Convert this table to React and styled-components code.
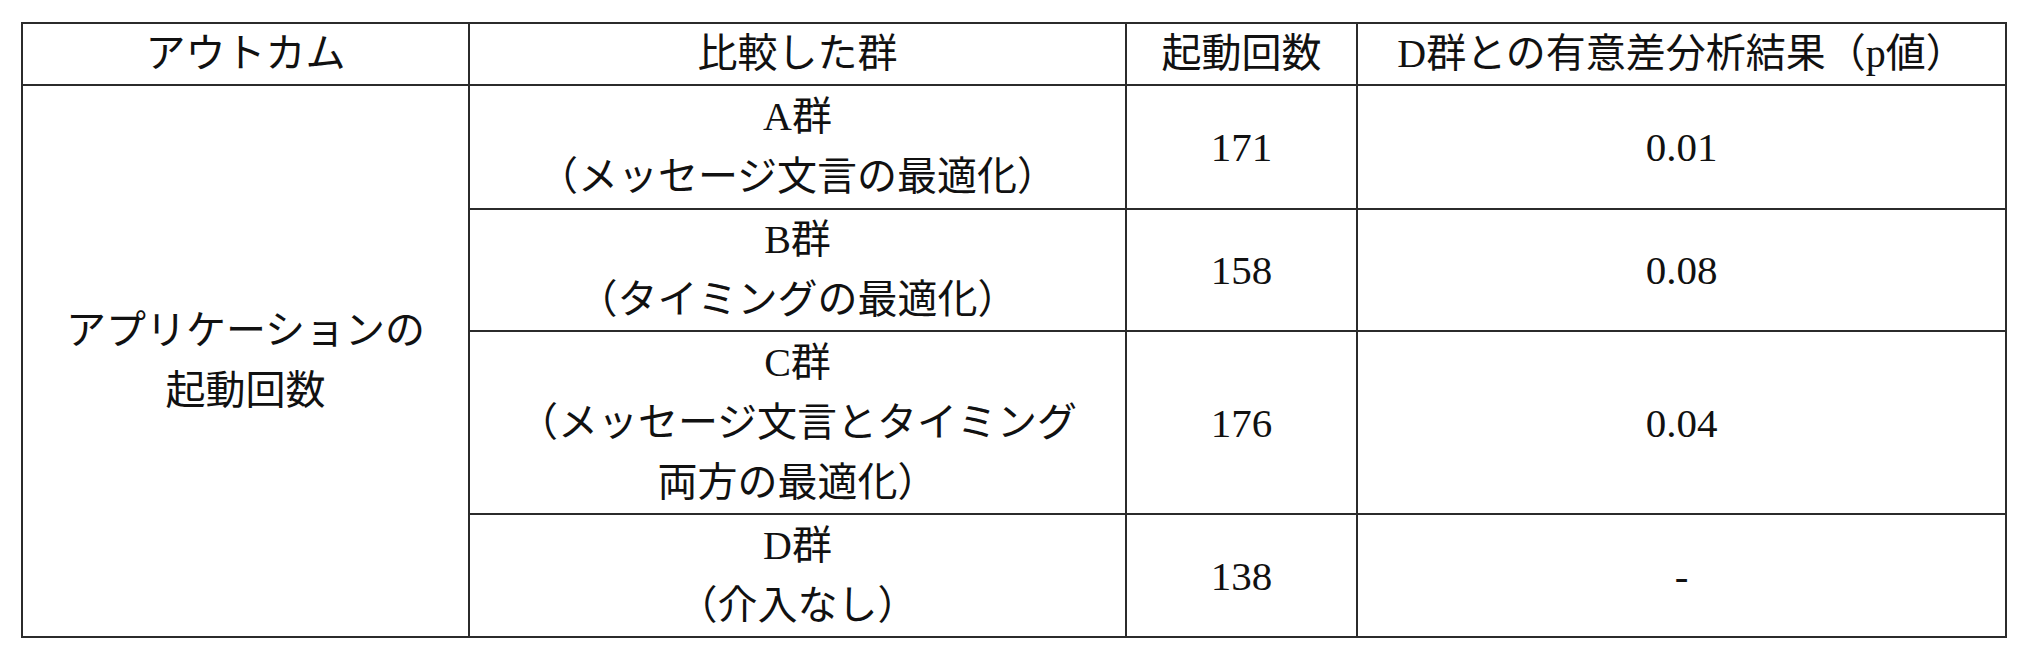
import React from 'react';
import styled, { createGlobalStyle } from 'styled-components';

const GlobalStyle = createGlobalStyle`
  html, body {
    margin: 0;
    padding: 0;
    background: #ffffff;
  }
  body {
    font-family: "Liberation Serif", "Noto Sans CJK JP", serif;
    color: #111111;
  }
`;

const rows = [
  { group: 'A群', note: ['（メッセージ文言の最適化）'], count: 171, p: '0.01', height: 124 },
  { group: 'B群', note: ['（タイミングの最適化）'], count: 158, p: '0.08', height: 122 },
  { group: 'C群', note: ['（メッセージ文言とタイミング', '両方の最適化）'], count: 176, p: '0.04', height: 183 },
  { group: 'D群', note: ['（介入なし）'], count: 138, p: '-', height: 123 },
];

export default function App() {
  return (
    <>
      <GlobalStyle />
      <Page>
        <Table>
          <colgroup>
            <col style={{ width: 447 }} />
            <col style={{ width: 657 }} />
            <col style={{ width: 231 }} />
            <col style={{ width: 649 }} />
          </colgroup>
          <thead>
            <Row height={62}>
              <HeadCell>アウトカム</HeadCell>
              <HeadCell>比較した群</HeadCell>
              <HeadCell>起動回数</HeadCell>
              <HeadCell>D群との有意差分析結果（p値）</HeadCell>
            </Row>
          </thead>
          <tbody>
            {rows.map((r, i) => (
              <Row key={r.group} height={r.height}>
                {i === 0 && (
                  <Cell rowSpan={rows.length}>
                    アプリケーションの
                    <br />
                    起動回数
                  </Cell>
                )}
                <Cell>
                  {r.group}
                  {r.note.map((line) => (
                    <React.Fragment key={line}>
                      <br />
                      {line}
                    </React.Fragment>
                  ))}
                </Cell>
                <Number>{r.count}</Number>
                <Number>{r.p}</Number>
              </Row>
            ))}
          </tbody>
        </Table>
      </Page>
    </>
  );
}

const Page = styled.div`
  padding: 22px 0 0 21px;
`;

const Table = styled.table`
  border-collapse: collapse;
  table-layout: fixed;
  width: 1984px;
  font-size: 40px;
  line-height: 60px;
`;

const Row = styled.tr`
  height: ${(p) => p.height}px;
`;

const Cell = styled.td`
  border: 2px solid #2b2b2b;
  padding: 0;
  text-align: center;
  vertical-align: middle;
  white-space: nowrap;
`;

const Number = styled(Cell)`
  font-size: 41px;
`;

const HeadCell = styled(Cell).attrs({ as: 'th' })`
  font-weight: 400;
`;
